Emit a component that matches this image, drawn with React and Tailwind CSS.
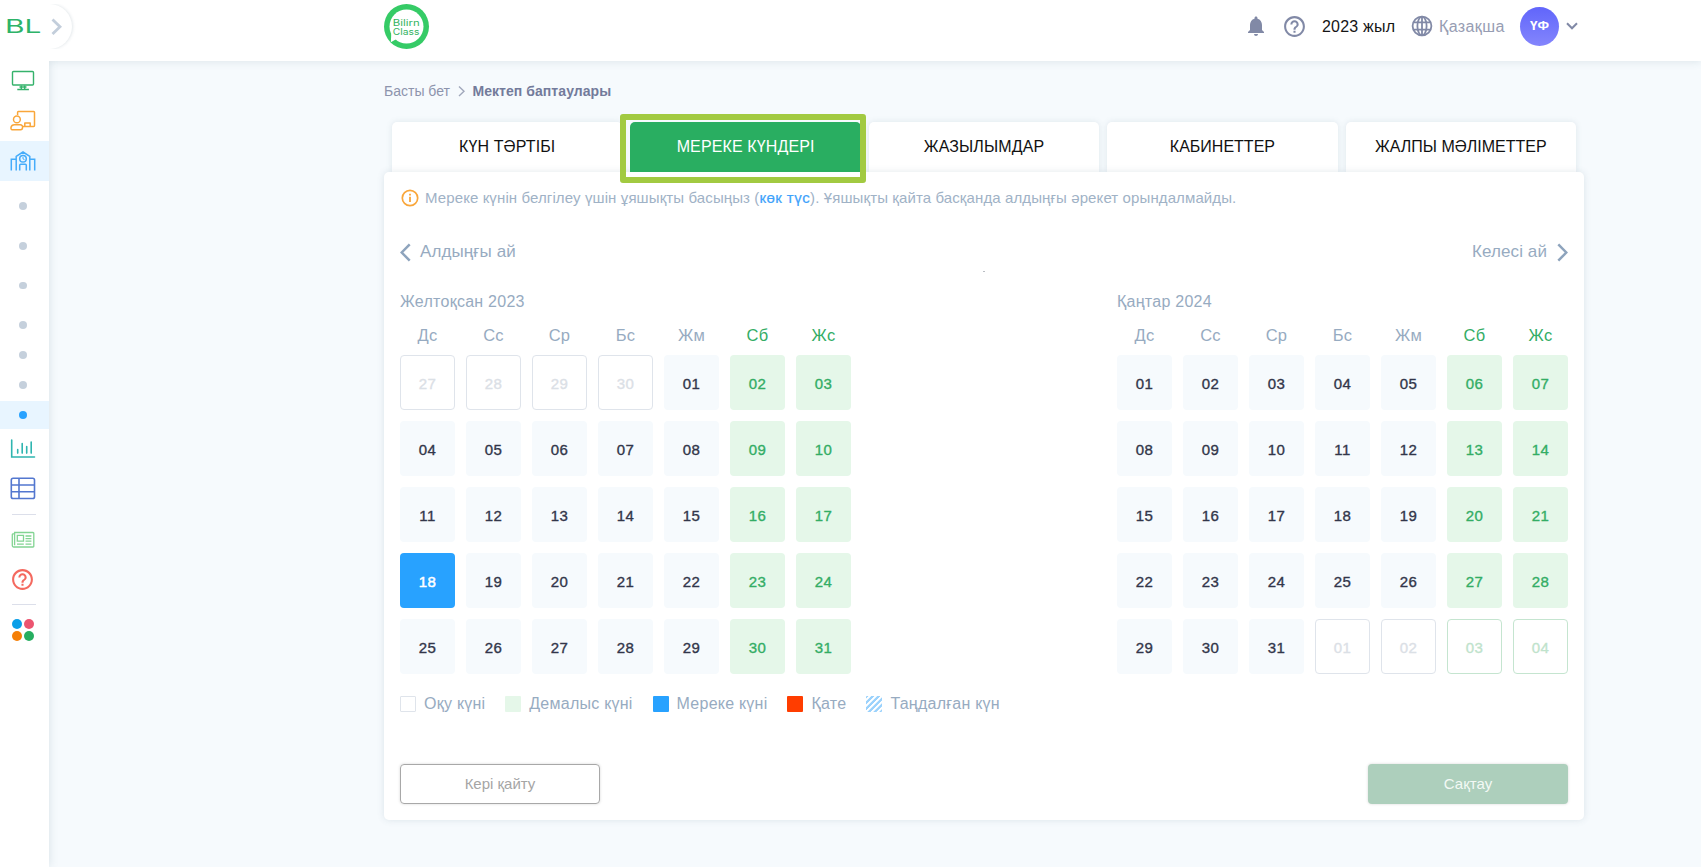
import { MdNotifications, MdHelpOutline } from "react-icons/md";

const WEEKDAYS = ["Дс", "Сс", "Ср", "Бс", "Жм", "Сб", "Жс"];
const TABS = ["КҮН ТӘРТІБІ", "МЕРЕКЕ КҮНДЕРІ", "ЖАЗЫЛЫМДАР", "КАБИНЕТТЕР", "ЖАЛПЫ МӘЛІМЕТТЕР"];

const pad = (n) => String(n).padStart(2, "0");
const range = (from, to) => Array.from({ length: to - from + 1 }, (_, i) => from + i);

const DECEMBER = [
  ...range(27, 30).map((n) => ({ n, other: true })),
  ...range(1, 31).map((n) => ({ n, holiday: n === 18 })),
];
const JANUARY = [...range(1, 31).map((n) => ({ n })), ...range(1, 4).map((n) => ({ n, other: true }))];

function dayClass(day, weekend) {
  if (day.holiday) return "bg-[#28a2ff] text-white [-webkit-text-stroke:0.5px_#ffffff]";
  if (day.other && weekend) return "border border-[#c5e5d0] text-[#bfe3cc] [-webkit-text-stroke:0.35px_#bfe3cc]";
  if (day.other) return "border border-[#dfe4eb] text-[#dbe0e6] [-webkit-text-stroke:0.35px_#dbe0e6]";
  if (weekend) return "bg-[#e5f7e9] text-[#33ad65] [-webkit-text-stroke:0.35px_#33ad65]";
  return "bg-[#f6fafd] text-[#32364a] [-webkit-text-stroke:0.35px_#32364a]";
}

function Month({ title, days }) {
  return (
    <section className="w-[451px]">
      <h2 className="h-6 text-base leading-[26px] tracking-[0.26px] text-[#97abc1]">{title}</h2>
      <div className="mt-[9px] grid h-6 grid-cols-[repeat(7,55px)] gap-[11px] text-center text-[16.5px] leading-[26px]">
        {WEEKDAYS.map((d, i) => (
          <div key={d} className={i > 4 ? "tracking-[0.2px] text-[#33ad65]" : "tracking-[0.2px] text-[#97abc1]"}>
            {d}
          </div>
        ))}
      </div>
      <div className="mt-[9px] grid grid-cols-[repeat(7,55px)] gap-[11px]">
        {days.map((day, i) => (
          <div
            key={i}
            className={`flex h-[55px] items-center justify-center rounded-[4px] pt-[3px] text-[15px] tracking-[0.5px] ${dayClass(day, i % 7 > 4)}`}
          >
            {pad(day.n)}
          </div>
        ))}
      </div>
    </section>
  );
}

function MonitorIcon() {
  return (
    <svg width="24" height="22" viewBox="0 0 24 22" fill="none" stroke="#35b26b" strokeWidth="1.4">
      <rect x="1.5" y="1.5" width="21" height="13.5" rx="1" />
      <path d="M10.3 15.5v3.500M13.700 15.500v3.500M8.500 17h7M6.300 19.500h11.600" />
    </svg>
  );
}

function TeacherIcon() {
  return (
    <svg width="26" height="22" viewBox="0 0 26 22" fill="none" stroke="#f9a63a" strokeWidth="1.5" strokeLinejoin="round">
      <path d="M7.6 5V2.4a.8.8 0 0 1 .8-.8h15.3a.8.8 0 0 1 .8.8v13.2a.8.8 0 0 1-.8.8H12.6" />
      <circle cx="6.9" cy="9.4" r="3.4" />
      <path d="M4.4 14.8h5.8c3.4 0 2.8 5 .4 5H2.2c-2 0-1.800-5 2.200-5z" />
      <path d="M14.800 16.200v-3.200h5.400v3.200" />
    </svg>
  );
}

function SchoolIcon() {
  return (
    <svg width="26" height="22" viewBox="0 0 26 22" fill="none" stroke="#45acfa" strokeWidth="1.500">
      <path d="M1.300 20.500V9.300h4.900M24.700 20.500V9.300h-4.900M6.200 20.500V6.300L13 2l6.800 4.300v14.200M9.700 20.500v-5.300a1 1 0 0 1 1-1h4.600a1 1 0 0 1 1 1v5.300" />
      <circle cx="13" cy="8.700" r="3.300" />
      <path d="M13 6.900v2l1.500.7" strokeWidth="1" />
    </svg>
  );
}

function ChartIcon() {
  return (
    <svg width="26" height="20" viewBox="0 0 26 20" fill="none" stroke="#2fb5b0" strokeWidth="1.600" strokeLinecap="round">
      <path d="M1.700 1v17h22.800M7.700 10.500v3.600M12.200 4.500v9.600M16.700 7.500v6.600M21.200 3v11.100" />
    </svg>
  );
}

function TableIcon() {
  return (
    <svg width="26" height="24" viewBox="0 0 26 24" fill="none" stroke="#5377cf" strokeWidth="1.600">
      <rect x="1.300" y="1.300" width="23.200" height="20.200" rx="1.800" />
      <path d="M1.300 8h23.200M1.300 14.800h23.200M9 1.300v20.200" />
    </svg>
  );
}

function NewsIcon() {
  return (
    <svg width="24" height="18" viewBox="0 0 24 18" fill="none" stroke="#82d492" strokeWidth="1.300">
      <path d="M3.600 1.500H22a.8.800 0 0 1 .8.800v12.900a.8.800 0 0 1-.8.800H2.700a1.400 1.400 0 0 1-1.400-1.400V3.600a.8.800 0 0 1 .8-.8h1.500zM3.600 2.800v11.400" />
      <path d="M6.300 4.400h6.200v5.800H6.300z" />
      <path d="M14.500 5h5.900M14.500 7.600h5.900M14.500 10.200h5.900M6 13.200h6.800M14.500 13.200h5.900" />
    </svg>
  );
}

function Bullet({ className, active }) {
  return (
    <div className={`flex w-full shrink-0 items-center justify-center pr-[3px] ${className}`}>
      <span className={active ? "size-[7.500px] rounded-full bg-[#28a2ff]" : "size-[7.500px] rounded-full bg-[#c5d0dc]"} />
    </div>
  );
}

function Sidebar() {
  const item = "flex h-10 w-full shrink-0 items-center justify-center pr-[3px]";
  return (
    <aside className="relative z-10 flex w-[49px] shrink-0 flex-col bg-white shadow-[0_0_9px_rgba(80,110,130,0.180)]">
      <div className="flex h-[61px] shrink-0 items-center pb-[9px] pl-[5px]">
        <svg width="40" height="26" viewBox="0 0 40 26" className="overflow-visible">
          <text
            x="0"
            y="19.700"
            textLength="36.500"
            lengthAdjust="spacingAndGlyphs"
            fill="#2db368"
            fontFamily="Inter, sans-serif"
            fontSize="18.500"
            fontWeight="400"
          >
            BL
          </text>
        </svg>
      </div>
      <div className={item}><MonitorIcon /></div>
      <div className={item}><TeacherIcon /></div>
      <div className={`${item} bg-[#e8f5ff]`}><SchoolIcon /></div>
      <Bullet className="mt-[5px] h-10" />
      <Bullet className="h-10" />
      <Bullet className="h-[39px]" />
      <Bullet className="h-[35px] pt-[5px]" />
      <Bullet className="h-[30px]" />
      <Bullet className="mb-px h-[30px]" />
      <Bullet className="h-7 bg-[#e8f5ff]" active />
      <div className={item}><ChartIcon /></div>
      <div className={item}><TableIcon /></div>
      <div className="mt-[5px] ml-3 h-px w-6 shrink-0 bg-[#dcdfea]" />
      <div className={`${item} mt-[5px]`}><NewsIcon /></div>
      <div className={`${item} pb-[2px]`}><MdHelpOutline size={25} color="#f4695f" className="mr-px" /></div>
      <div className="mt-1 ml-3 h-px w-6 shrink-0 bg-[#dcdfea]" />
      <div className="mt-[14px] ml-3 grid w-[22px] grid-cols-2 gap-[2.400px]">
        <span className="size-[9.800px] rounded-full bg-[#0b9fe8]" />
        <span className="size-[9.800px] rounded-full bg-[#ec5570]" />
        <span className="size-[9.800px] rounded-full bg-[#f57f06]" />
        <span className="size-[9.800px] rounded-full bg-[#27ae60]" />
      </div>
    </aside>
  );
}

function BrandLogo() {
  return (
    <svg width="46" height="46" viewBox="0 0 46 46" className="shrink-0">
      <circle cx="22.500" cy="22.500" r="22.500" fill="#35cb66" />
      <circle cx="22.500" cy="22.500" r="17" fill="#fff" />
      <path d="M7.300 29.500 6.800 38.200l7-4z" fill="#fff" />
      <g fill="#35b45f" fontFamily="Inter, sans-serif" fontSize="9">
        <text x="8.800" y="22" textLength="27" lengthAdjust="spacingAndGlyphs">Bilirn</text>
        <text x="8.800" y="30.600" textLength="26.500" lengthAdjust="spacingAndGlyphs">Class</text>
      </g>
    </svg>
  );
}

function Header() {
  return (
    <header className="relative z-20 flex h-[61px] shrink-0 items-center bg-white pr-[123px] pb-2 pl-[335px] shadow-[0_1px_8px_rgba(80,110,130,0.140)] [clip-path:inset(0_0_-20px_0)]">
      <BrandLogo />
      <div className="ml-auto flex items-center">
        <MdNotifications size={24} color="#8189a6" className="mr-[14px] mb-px" />
        <MdHelpOutline size={25} color="#8189a6" className="mr-[15px] mb-px" />
        <span className="w-[74px] text-base tracking-[0.200px] whitespace-nowrap text-[#151515]">2023 жыл</span>
        <svg width="22" height="22" viewBox="0 0 22 22" fill="none" stroke="#8189a6" strokeWidth="1.800" className="mb-px ml-[15px]">
          <circle cx="11" cy="11" r="9.400" />
          <ellipse cx="11" cy="11" rx="4.600" ry="9.400" />
          <path d="M11 1.600v18.800M2.600 7.400h16.800M2.600 14.600h16.800" />
        </svg>
        <span className="ml-[6px] w-[67px] text-base tracking-[0.400px] whitespace-nowrap text-[#979db3]">Қазақша</span>
        <span className="ml-[14px] flex size-[39px] items-center justify-center rounded-full bg-linear-to-b from-[#6165fb] to-[#8485fc] text-[13.500px] font-bold text-white">
          ҮФ
        </span>
        <svg width="12" height="8" viewBox="0 0 12 8" fill="none" stroke="#8189a6" strokeWidth="2" className="ml-[7px] mb-px">
          <path d="m1 1.300 5 5 5-5" />
        </svg>
      </div>
    </header>
  );
}

function Tabs() {
  return (
    <nav className="mx-2 mt-[21px] flex gap-2">
      {TABS.map((label, i) => (
        <div
          key={label}
          className={`relative flex h-[50px] flex-1 items-center justify-center rounded-t-[5px] text-base whitespace-nowrap ${
            i === 1
              ? "z-10 bg-[#29ae61] text-white"
              : "bg-white text-[#111] shadow-[0_0_6px_rgba(80,110,130,0.140)]"
          }`}
        >
          <span className={i < 3 ? "tracking-[0.120px]" : ""}>{label}</span>
          {i === 1 && (
            <span className="absolute -top-2 -right-[5px] -bottom-[11px] -left-[10px] rounded-[3px] border-[6px] border-[#a2ca41]" />
          )}
        </div>
      ))}
    </nav>
  );
}

function Legend() {
  const items = [
    ["Оқу күні", "border border-[#dfe4eb]"],
    ["Демалыс күні", "bg-[#e5f7e9]"],
    ["Мереке күні", "bg-[#28a2ff]"],
    ["Қате", "bg-[#ff3d00]"],
    [
      "Таңдалған күн",
      "bg-[repeating-linear-gradient(135deg,#9bd2fc_0px,#9bd2fc_1.500px,#ffffff_2.200px,#ffffff_3.400px,#9bd2fc_4.200px)]",
    ],
  ];
  return (
    <div className="mt-[18px] flex h-6 items-center gap-5 text-base leading-6 text-[#97abc1]">
      {items.map(([label, swatch]) => (
        <div key={label} className="flex items-center gap-2">
          <span className={`size-4 rounded-[1px] ${swatch}`} />
          <span className="tracking-[0.250px]">{label}</span>
        </div>
      ))}
    </div>
  );
}

export default function App() {
  return (
    <div className="relative flex h-[867px] w-full overflow-hidden bg-[#f6fafd] font-['Liberation_Sans',Arial,sans-serif]">
      <Sidebar />
      <div className="absolute top-[4px] left-[49px] z-30 flex h-[45px] w-[30px] items-center overflow-hidden">
        <span className="flex h-[45px] w-[23px] items-center rounded-r-full bg-white pl-[2px] shadow-[1px_0_3px_rgba(80,110,130,0.160)]">
          <svg width="12" height="18" viewBox="0 0 12 18" fill="none" stroke="#c3cedb" strokeWidth="2.800">
            <path d="m1.500 1.500 7.500 7.300-7.500 7.300" />
          </svg>
        </span>
      </div>
      <div className="flex min-w-0 flex-1 flex-col">
        <Header />
        <main className="ml-[335px] w-[1200px] pt-5">
          <div className="flex h-5 items-center text-sm leading-5">
            <span className="text-[#8d94ad]">Басты бет</span>
            <svg width="7" height="12" viewBox="0 0 7 12" fill="none" stroke="#a0a7bb" strokeWidth="1.400" className="mr-[7.500px] ml-[8px]">
              <path d="m1 1.500 5 4.700-5 4.700" />
            </svg>
            <span className="font-bold tracking-[0.060px] text-[#737b9b]">Мектеп баптаулары</span>
          </div>
          <Tabs />
          <div className="relative rounded-[5px] bg-white px-4 pt-3 pb-4 shadow-[0_0_7px_rgba(80,110,130,0.160)]">
            <div className="flex h-7 items-center">
              <svg width="18" height="18" viewBox="0 0 18 18" fill="none" stroke="#f9a63a" strokeWidth="1.700" className="mb-px ml-px">
                <circle cx="9" cy="9" r="7.700" />
                <path d="M9 7.800v5.200M9 4.800v1.700" strokeWidth="1.800" />
              </svg>
              <p className="ml-[6px] text-[15px] tracking-[0.110px] whitespace-pre text-[#a0b2c6]">
                Мереке күнін белгілеу үшін ұяшықты басыңыз (
                <span className="tracking-[0.450px] text-[#3da2fb] [-webkit-text-stroke:0.200px_#3da2fb]">көк түс</span>
                ). Ұяшықты қайта басқанда алдыңғы әрекет орындалмайды.
              </p>
            </div>
            <div className="mt-[26px] flex h-7 items-center justify-between text-[17px] tracking-[0.100px] text-[#97abc1]">
              <span className="flex items-center">
                <svg width="12" height="19" viewBox="0 0 12 19" fill="none" stroke="#8ea4bd" strokeWidth="2.500" className="mr-2">
                  <path d="M9.700 1.300 1.700 9.500l8 8.200" />
                </svg>
                Алдыңғы ай
              </span>
              <span className="flex items-center">
                Келесі ай
                <svg width="12" height="19" viewBox="0 0 12 19" fill="none" stroke="#8ea4bd" strokeWidth="2.500" className="ml-[9px]">
                  <path d="m2.300 1.300 8 8.200-8 8.200" />
                </svg>
              </span>
            </div>
            <span className="absolute top-[99px] left-[599px] h-px w-[2px] bg-[#b9bdc3]" />
            <div className="mt-[23px] flex justify-between">
              <Month title="Желтоқсан 2023" days={DECEMBER} />
              <Month title="Қаңтар 2024" days={JANUARY} />
            </div>
            <Legend />
            <div className="mt-12 flex justify-between">
              <button className="h-10 w-[200px] rounded-[4px] border border-[#a8a8a8] text-[15px] text-[#a5a5a5] shadow-[0_0_3px_rgba(0,0,0,0.160)]">
                Кері қайту
              </button>
              <button className="h-10 w-[200px] rounded-[4px] bg-[#adcfbc] text-[15px] text-[#f3f9f5] shadow-[0_0_3px_rgba(0,0,0,0.160)]">
                Сақтау
              </button>
            </div>
          </div>
        </main>
      </div>
    </div>
  );
}
